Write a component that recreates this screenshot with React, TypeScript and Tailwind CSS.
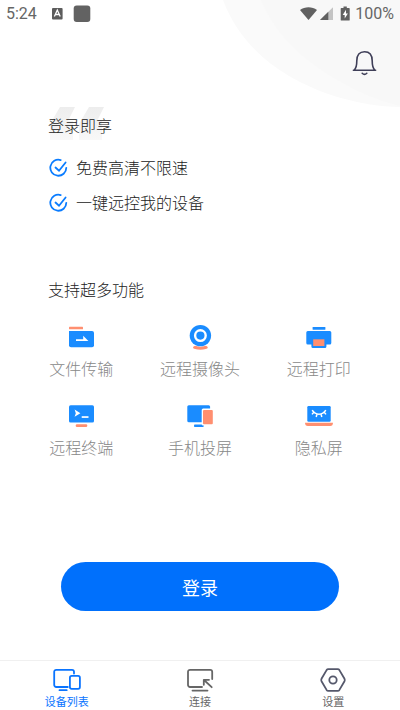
import { ReactNode } from "react";

const BLUE = "#1a8cff";
const CORAL = "#ff8f70";

const perks = ["免费高清不限速", "一键远控我的设备"];

const features: { label: string; icon: ReactNode }[] = [
  {
    label: "文件传输",
    icon: (
      <>
        <rect x="2" y="3.7" width="14" height="2.6" rx="0.6" fill={CORAL} />
        <path
          d="M2 8h23a2 2 0 0 1 2 2v12.3a2 2 0 0 1-2 2H4a2 2 0 0 1-2-2z"
          fill={BLUE}
        />
        <path d="M9 16.3h7.2v-3.6l5.2 5.3H9z" fill="#fff" />
      </>
    ),
  },
  {
    label: "远程摄像头",
    icon: (
      <>
        <ellipse cx="14.4" cy="24.4" rx="7.4" ry="2.3" fill={CORAL} />
        <circle cx="14.4" cy="12.6" r="11.2" fill="#fff" />
        <circle cx="14.4" cy="12.6" r="10.7" fill={BLUE} />
        <circle cx="14.4" cy="12.6" r="5.3" fill={BLUE} stroke="#fff" strokeWidth="2.4" />
      </>
    ),
  },
  {
    label: "远程打印",
    icon: (
      <>
        <rect x="7.6" y="4" width="12.8" height="2.8" rx="0.6" fill={BLUE} />
        <path
          d="M2.8 8h22a1.5 1.5 0 0 1 1.5 1.5v10.4a1.5 1.5 0 0 1-1.5 1.5h-3.4v2.1a1.5 1.5 0 0 1-1.5 1.5h-12a1.5 1.5 0 0 1-1.5-1.5v-2.1H2.8a1.5 1.5 0 0 1-1.5-1.5V9.5a1.5 1.5 0 0 1 1.5-1.5z"
          fill={BLUE}
        />
        <rect x="8.2" y="16.3" width="11.2" height="6.7" fill={CORAL} />
      </>
    ),
  },
  {
    label: "远程终端",
    icon: (
      <>
        <rect x="2" y="3.2" width="25" height="17.3" rx="1.6" fill={BLUE} />
        <path d="M7.6 7.6 13.4 11.2 7.6 14.8 8.8 11.2z" fill="#fff" />
        <rect x="14.7" y="14.2" width="6.8" height="1.7" fill="#fff" />
        <rect x="8.7" y="22.3" width="11.6" height="2.7" rx="1.3" fill={CORAL} />
      </>
    ),
  },
  {
    label: "手机投屏",
    icon: (
      <>
        <rect x="1.3" y="3.2" width="22.8" height="17" rx="1.5" fill={BLUE} />
        <rect x="8" y="22.4" width="9.7" height="2.6" rx="0.8" fill={BLUE} />
        <rect x="15.7" y="6.6" width="12.3" height="17" rx="1.5" fill="#fff" />
        <rect x="17" y="8" width="9.8" height="14.2" rx="1" fill={CORAL} />
      </>
    ),
  },
  {
    label: "隐私屏",
    icon: (
      <>
        <rect x="2.3" y="4" width="23.4" height="15.7" rx="1.2" fill={BLUE} />
        <path d="M0 20.7h28c0 2-1 3.3-2.8 3.3H2.8C1 24 0 22.7 0 20.7z" fill={CORAL} />
        <path
          d="M7.2 8.2c1.6 2.6 4 4 6.8 4s5.2-1.4 6.8-4M8.8 10.2l-1.8 2.2M12 12l-.8 3M16 12l.8 3M19.2 10.2l1.8 2.2"
          fill="none"
          stroke="#fff"
          strokeWidth="1.5"
        />
      </>
    ),
  },
];

const tabs: { label: string; active?: boolean; icon: ReactNode }[] = [
  {
    label: "设备列表",
    active: true,
    icon: (
      <>
        <path d="M14.8 21H3.2a2 2 0 0 1-2-2V5.8a2 2 0 0 1 2-2H19a2 2 0 0 1 2 2V7.5M6.5 24.2h7.2" />
        <rect x="16.9" y="9.9" width="10" height="13" rx="1.8" />
      </>
    ),
  },
  {
    label: "连接",
    icon: (
      <path d="M16 21H4a2 2 0 0 1-2-2V5.8a2 2 0 0 1 2-2h20.2a2 2 0 0 1 2 2V13M6.5 24.6h15M17.8 18.8v-5h5.2M18 14l7.7 7.2" />
    ),
  },
  {
    label: "设置",
    icon: (
      <g stroke="#55586b">
        <path d="M9.3 3.2h9.4c.8 0 1.3.3 1.7.9l5.1 8.7c.4.8.4 1.6 0 2.4l-5.1 8.7c-.4.6-.9.9-1.7.9H9.3c-.8 0-1.3-.3-1.7-.9l-5.1-8.7c-.4-.8-.4-1.6 0-2.4l5.1-8.7c.4-.6.9-.9 1.7-.9z" />
        <circle cx="14" cy="14" r="3.7" />
      </g>
    ),
  },
];

function StatusBar() {
  return (
    <div className="flex h-7 items-center justify-between px-[6px] font-[Roboto,sans-serif] text-base font-normal text-[#666]">
      <div className="flex items-center">
        <span>5:24</span>
        <svg className="ml-[14px]" width="40" height="18" viewBox="0 0 40 18" aria-hidden="true">
          <rect x="1" y="3" width="10.6" height="11.6" rx="1" fill="#5c5c5c" />
          <path d="M3.4 11.5 6.3 5l2.9 6.5M4.6 9.5H8" fill="none" stroke="#fff" strokeWidth="1.3" />
          <rect x="22.7" y="0.6" width="16.6" height="16.4" rx="3" fill="#626262" />
        </svg>
      </div>
      <div className="flex items-center gap-[5px]">
        <svg width="50" height="16" viewBox="0 0 50 16" aria-hidden="true">
          <path d="M0 4C4.8.2 12.2.2 17 4L8.5 14z" fill="#616161" />
          <path d="M33 1.2V14H20z" fill="#c4c4c4" />
          <path d="M28.3 5.8V14H20z" fill="#616161" />
          <path
            d="M43.5.5h3.3v1.4H49c.4 0 .7.3.7.7v11.3c0 .4-.3.7-.7.7h-7.6c-.4 0-.7-.3-.7-.7V2.6c0-.4.3-.7.7-.7h2.1z"
            fill="#616161"
          />
          <path d="M46 3.8 42.7 8.9h2v3.6l3.2-5.1H46z" fill="#fff" />
        </svg>
        <span>100%</span>
      </div>
    </div>
  );
}

function CheckIcon() {
  return (
    <svg
      width="20"
      height="20"
      viewBox="0 0 20 20"
      fill="none"
      stroke="#0a7cff"
      strokeWidth="1.8"
      strokeLinecap="round"
      aria-hidden="true"
    >
      <path d="M12.7 3.1A8 8 0 1 0 18.3 10.8" />
      <path d="M7.5 10.5 11 13.7 17.6 5.5" />
    </svg>
  );
}

export default function App() {
  return (
    <div className="relative isolate flex min-h-screen flex-col bg-white font-['Noto_Sans_CJK_SC',sans-serif] font-light text-[#222]">
      <svg
        className="absolute right-0 top-0 -z-10"
        width="180"
        height="108"
        viewBox="0 0 180 108"
        aria-hidden="true"
      >
        <path d="M3 0C15 32 37 57 69 76 102 95 140 106 180 107V0z" fill="#fafafa" />
        <path d="M41 0C55 33 78 55 109 75 133 90 155 100 180 106V0z" fill="#f8f8f8" />
      </svg>

      <StatusBar />

      <header className="flex justify-end pr-[22px] pt-[21px]">
        <button type="button" aria-label="消息通知">
          <svg
            className="block"
            width="28"
            height="28"
            viewBox="0 0 28 28"
            fill="none"
            stroke="#3f3f58"
            strokeWidth="1.6"
            strokeLinecap="round"
            aria-hidden="true"
          >
            <path d="M3.4 21.2h22.2M4.2 21c2-1.7 2.6-4.2 2.6-9.2 0-6 2.8-9.1 7.7-9.1s7.7 3.1 7.7 9.1c0 5 .6 7.5 2.6 9.2M12.2 24.3c1.4 1.4 3.2 1.4 4.6 0" />
          </svg>
        </button>
      </header>

      <main className="flex grow flex-col pt-9">
        <section className="px-12">
          <div className="relative">
            <svg
              className="absolute -top-2 left-0 -z-10"
              width="58"
              height="36"
              viewBox="0 0 58 36"
              aria-hidden="true"
            >
              <defs>
                <linearGradient id="quote" x1="0" y1="0" x2="0" y2="1">
                  <stop offset="0" stopColor="#ededed" />
                  <stop offset="1" stopColor="#f8f8f8" />
                </linearGradient>
              </defs>
              <path
                d="M12 2h15l-7 14h5v19H2V19zM41 2h15l-7 14h5v19H31V19z"
                fill="url(#quote)"
              />
            </svg>
            <h1 className="text-base leading-6">登录即享</h1>
          </div>
          <ul className="mt-[18px] flex flex-col gap-[11px]">
            {perks.map((perk) => (
              <li key={perk} className="flex items-center gap-2 text-base leading-6">
                <CheckIcon />
                {perk}
              </li>
            ))}
          </ul>
        </section>

        <section className="pt-[63px]">
          <h2 className="px-12 text-base leading-6">支持超多功能</h2>
          <ul className="mx-[22px] mt-[22px] grid grid-cols-3 gap-y-[22px]">
            {features.map((feature) => (
              <li key={feature.label} className="flex flex-col items-center gap-[5px]">
                <svg width="28" height="28" viewBox="0 0 28 28" aria-hidden="true">
                  {feature.icon}
                </svg>
                <span className="text-base leading-6 text-[#888]">{feature.label}</span>
              </li>
            ))}
          </ul>
        </section>

        <div className="px-[61px] pb-12 pt-[103px]">
          <button
            type="button"
            className="h-[49px] w-full rounded-full bg-[#0070fc] text-lg font-normal text-white"
          >
            登录
          </button>
        </div>
      </main>

      <nav className="grid grid-cols-3 border-t border-[#f0f0f0] pb-[2px] pt-[5px]">
        {tabs.map((tab) => (
          <a
            key={tab.label}
            href="#"
            aria-current={tab.active ? "page" : undefined}
            className={`flex flex-col items-center text-[11px] font-normal leading-[14px] ${
              tab.active ? "text-[#0a74ff]" : "text-[#666]"
            }`}
          >
            <svg
              width="28"
              height="28"
              viewBox="0 0 28 28"
              fill="none"
              stroke="currentColor"
              strokeWidth="1.8"
              strokeLinecap="round"
              strokeLinejoin="round"
              aria-hidden="true"
            >
              {tab.icon}
            </svg>
            {tab.label}
          </a>
        ))}
      </nav>
    </div>
  );
}
